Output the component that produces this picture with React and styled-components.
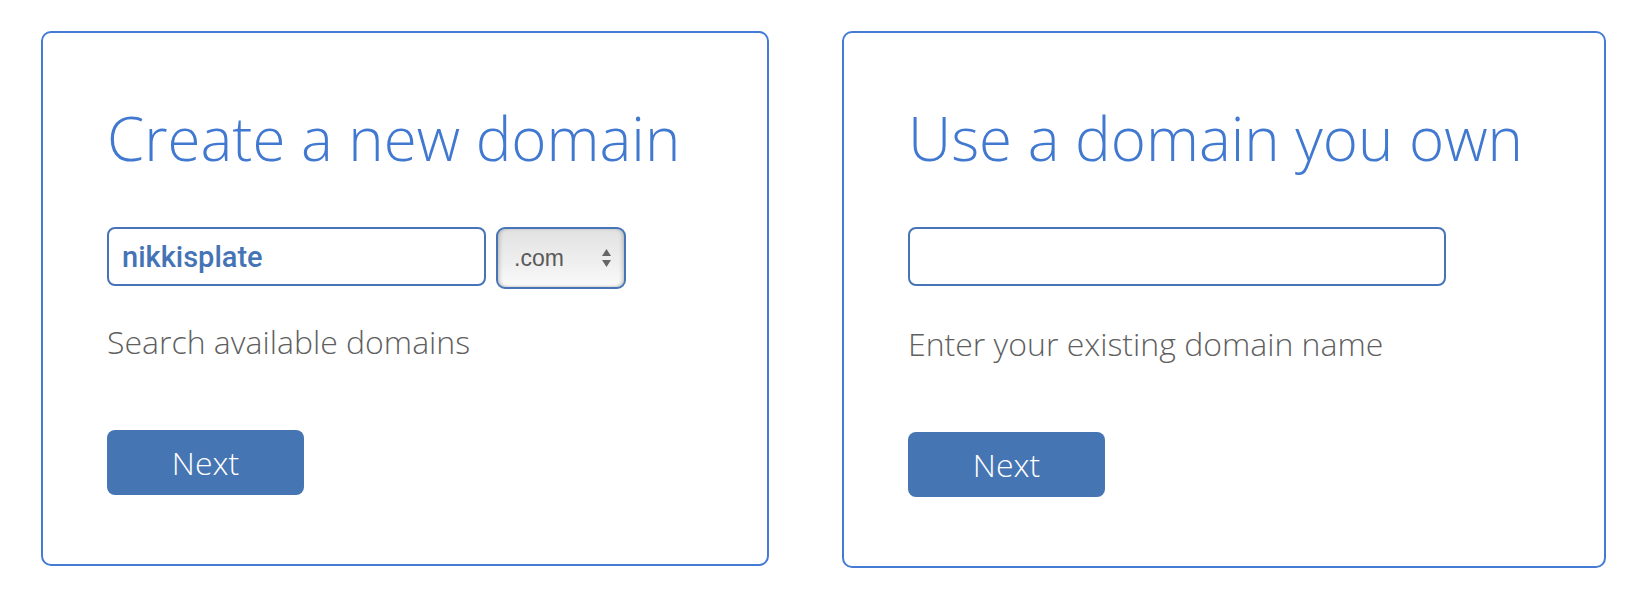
import styled, { createGlobalStyle } from "styled-components";

const GlobalStyle = createGlobalStyle`
  html, body {
    margin: 0;
    padding: 0;
    background: #ffffff;
  }
  body {
    font-family: "Open Sans", "Liberation Sans", sans-serif;
  }
`;

const Page = styled.div`
  display: flex;
  align-items: flex-start;
  gap: 73px;
  padding: 31px 0 0 41px;
`;

const Card = styled.div`
  box-sizing: border-box;
  width: ${(p) => p.$width}px;
  padding: 0 64px 69px;
  border: 2px solid #447bd4;
  border-radius: 10px;
  display: flex;
  flex-direction: column;
  align-items: flex-start;
`;

const Title = styled.h2`
  margin: 75px 0 0;
  font-family: "Open Sans", sans-serif;
  font-weight: 300;
  font-size: 60px;
  line-height: 1;
  color: #4178d0;
  white-space: nowrap;
`;

const Row = styled.div`
  display: flex;
  align-items: flex-start;
  gap: 10px;
  height: ${(p) => p.$height}px;
  margin-top: 59px;
`;

const TextInput = styled.input`
  box-sizing: border-box;
  width: ${(p) => p.$width}px;
  height: 59px;
  padding: 0 13px;
  border: 2px solid #4674b6;
  border-radius: 8px;
  background: #fff;
  font-family: Roboto, "Liberation Sans", Arial, sans-serif;
  font-weight: 500;
  font-size: 29px;
  color: #4574b6;
  outline: none;
`;

const SelectBox = styled.div`
  box-sizing: border-box;
  width: 130px;
  height: 62px;
  padding: 0 12px 0 16px;
  border: 2px solid #4674b6;
  border-radius: 9px;
  background: linear-gradient(#e2e2e2, #eeeeee 55%, #fafafa);
  box-shadow: inset 3px 0 4px -2px rgba(0, 0, 0, 0.25),
    inset -3px 0 4px -2px rgba(0, 0, 0, 0.25),
    inset 0 -2px 3px -2px rgba(0, 0, 0, 0.15);
  display: flex;
  align-items: center;
  justify-content: space-between;
  font-family: "Liberation Sans", Arial, sans-serif;
  font-size: 23px;
  color: #5a5a5a;
`;

const Helper = styled.p`
  margin: 37px 0 0;
  font-family: "Open Sans", sans-serif;
  font-weight: 300;
  font-size: 32px;
  line-height: 1;
  color: #5f5f5f;
  white-space: nowrap;
`;

const NextButton = styled.button`
  box-sizing: border-box;
  width: 197px;
  height: 65px;
  margin-top: 72px;
  border: none;
  border-radius: 8px;
  background: #4675b3;
  color: #ffffff;
  font-family: "Open Sans", sans-serif;
  font-weight: 300;
  font-size: 32px;
  cursor: pointer;
`;

const Arrows = () => (
  <svg width="11" height="20" viewBox="0 0 11 20">
    <path d="M5.5 1 L10 8 H1 Z" fill="#666" />
    <path d="M5.5 19 L10 12 H1 Z" fill="#666" />
  </svg>
);

export default function App() {
  return (
    <>
      <GlobalStyle />
      <Page>
        <Card $width={728}>
          <Title>Create a new domain</Title>
          <Row $height={62}>
            <TextInput $width={379} defaultValue="nikkisplate" />
            <SelectBox>
              <span>.com</span>
              <Arrows />
            </SelectBox>
          </Row>
          <Helper>Search available domains</Helper>
          <NextButton>Next</NextButton>
        </Card>
        <Card $width={764}>
          <Title>Use a domain you own</Title>
          <Row $height={64}>
            <TextInput $width={538} />
          </Row>
          <Helper>Enter your existing domain name</Helper>
          <NextButton>Next</NextButton>
        </Card>
      </Page>
    </>
  );
}
